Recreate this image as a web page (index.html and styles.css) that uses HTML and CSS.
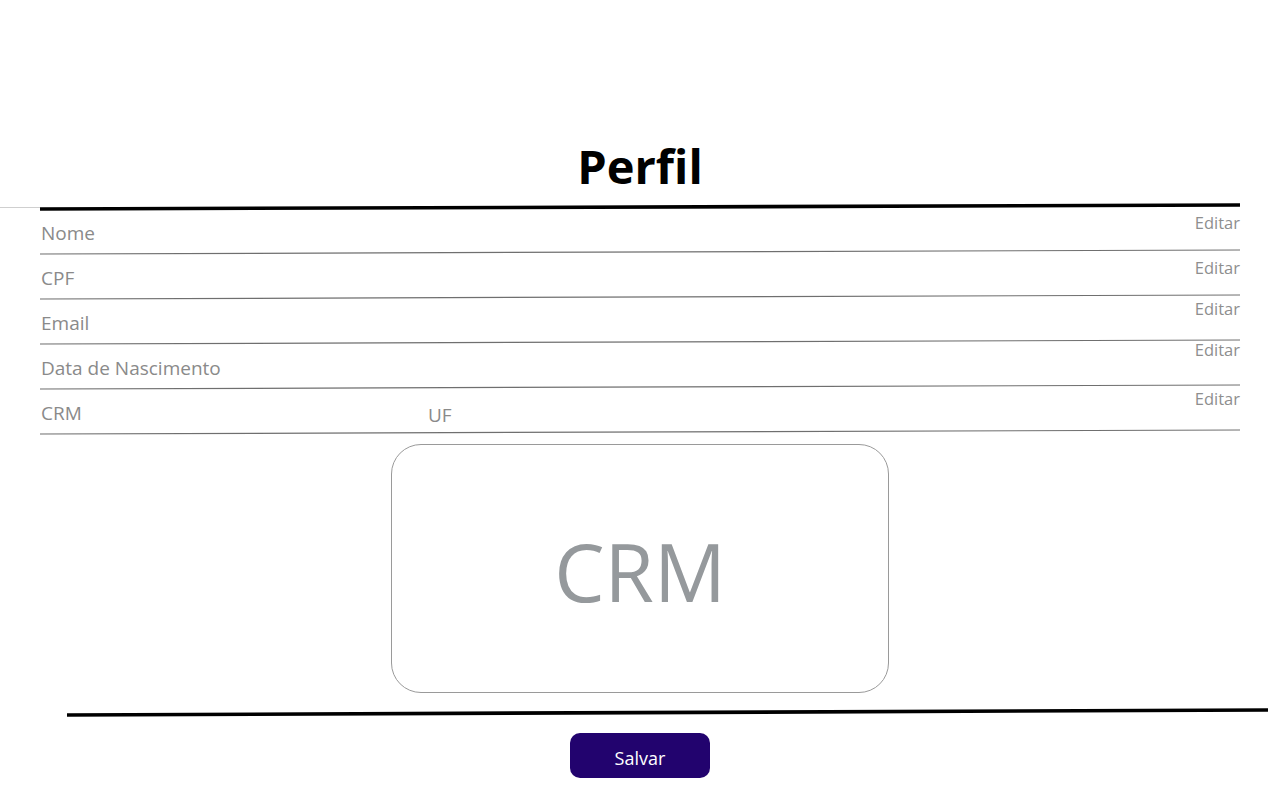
FILE: index.html
```html
<!DOCTYPE html>
<html lang="pt-BR">
<head>
<meta charset="utf-8">
<title>Perfil</title>
<link rel="stylesheet" href="styles.css">
</head>
<body>
<main class="page">
  <h1 class="title">Perfil</h1>
  <svg class="rule-top" width="1280" height="12" viewBox="0 0 1280 12">
    <line x1="0" y1="7.5" x2="40" y2="7.5" stroke="#cfcfcf" stroke-width="1"/>
    <line x1="40" y1="9" x2="1240" y2="5" stroke="#000" stroke-width="3.6"/>
  </svg>
  <section class="fields">
    <div class="field">
      <div class="field-main">
        <span class="label">Nome</span>
        <span class="edit edit-a">Editar</span>
      </div>
      <svg class="field-line" width="1200" height="8" viewBox="0 0 1200 8"><line x1="0" y1="5" x2="1200" y2="1" stroke="#6f6f6f" stroke-width="1.2"/></svg>
    </div>
    <div class="field">
      <div class="field-main">
        <span class="label">CPF</span>
        <span class="edit edit-a">Editar</span>
      </div>
      <svg class="field-line" width="1200" height="8" viewBox="0 0 1200 8"><line x1="0" y1="5" x2="1200" y2="1" stroke="#6f6f6f" stroke-width="1.2"/></svg>
    </div>
    <div class="field">
      <div class="field-main">
        <span class="label">Email</span>
        <span class="edit edit-b">Editar</span>
      </div>
      <svg class="field-line" width="1200" height="8" viewBox="0 0 1200 8"><line x1="0" y1="5" x2="1200" y2="1" stroke="#6f6f6f" stroke-width="1.2"/></svg>
    </div>
    <div class="field">
      <div class="field-main">
        <span class="label">Data de Nascimento</span>
        <span class="edit edit-c">Editar</span>
      </div>
      <svg class="field-line" width="1200" height="8" viewBox="0 0 1200 8"><line x1="0" y1="5" x2="1200" y2="1" stroke="#6f6f6f" stroke-width="1.2"/></svg>
    </div>
    <div class="field">
      <div class="field-main">
        <span class="label label-crm">CRM</span>
        <span class="label label-uf">UF</span>
        <span class="edit edit-b">Editar</span>
      </div>
      <svg class="field-line" width="1200" height="8" viewBox="0 0 1200 8"><line x1="0" y1="5" x2="1200" y2="1" stroke="#6f6f6f" stroke-width="1.2"/></svg>
    </div>
  </section>
  <div class="crm-card"><span class="crm-text">CRM</span></div>
  <svg class="rule-bottom" width="1280" height="14" viewBox="0 0 1280 14">
    <line x1="67" y1="10" x2="1268" y2="5" stroke="#000" stroke-width="3.6"/>
  </svg>
  <div class="actions">
    <button class="btn-save" type="button">Salvar</button>
  </div>
</main>
</body>
</html>
```

FILE: styles.css
```css
html, body {
  margin: 0;
  padding: 0;
  background: #ffffff;
}

body {
  font-family: "Open Sans", "Noto Sans", Arial, sans-serif;
  color: #000;
  width: 1280px;
  height: 800px;
  overflow: hidden;
}

.page {
  display: flex;
  flex-direction: column;
}

.title {
  margin: 0;
  padding-top: 138px;
  font-size: 47px;
  line-height: 56px;
  font-weight: 700;
  text-align: center;
  color: #000;
}

.rule-top {
  display: block;
  margin-top: 6px;
}

.fields {
  display: flex;
  flex-direction: column;
  padding: 0 40px;
}

.field {
  display: flex;
  flex-direction: column;
  height: 45px;
}

.field-main {
  display: flex;
  align-items: flex-start;
  height: 37px;
}

.label {
  padding-top: 9px;
  padding-left: 1px;
  font-size: 19px;
  line-height: 24px;
  color: #8a8a8a;
  white-space: nowrap;
}

.label-crm {
  width: 386px;
}

.label-uf {
  padding-top: 11px;
}

.edit {
  margin-left: auto;
  font-size: 16.5px;
  line-height: 20px;
  color: #8e8e8e;
}

.edit-a { margin-top: 1px; }
.edit-b { margin-top: -3px; }
.edit-c { margin-top: -7px; }

.field-line {
  display: block;
}

.crm-card {
  align-self: center;
  margin-top: 7px;
  width: 496px;
  height: 247px;
  border: 1px solid #9a9a9a;
  border-radius: 30px;
  display: flex;
  align-items: center;
  justify-content: center;
}

.crm-text {
  padding-top: 5px;
  font-size: 80px;
  line-height: 80px;
  color: #95999c;
}

.rule-bottom {
  display: block;
  margin-top: 12px;
}

.actions {
  display: flex;
  justify-content: center;
  margin-top: 14px;
}

.btn-save {
  width: 140px;
  height: 45px;
  border: none;
  border-radius: 10px;
  background: #22036e;
  color: #ffffff;
  font-family: "Open Sans", "Noto Sans", Arial, sans-serif;
  font-size: 18px;
  line-height: 24px;
  padding: 4px 0 0;
}
```
